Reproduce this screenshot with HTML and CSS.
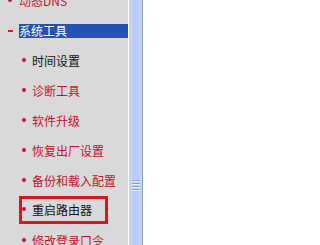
FILE: index.html
```html
<!DOCTYPE html>
<html>
<head>
<meta charset="utf-8">
<link rel="stylesheet" href="styles.css">
</head>
<body>
<div class="frame">
  <nav class="sidebar">
    <ul class="menu">
      <li class="row top"><span class="dot"></span><span class="lbl red">动态DNS</span></li>
      <li class="row top"><span class="dash"></span><span class="lbl hl">系统工具</span></li>
      <li class="row sub"><span class="dot"></span><span class="lbl dark">时间设置</span></li>
      <li class="row sub"><span class="dot"></span><span class="lbl red">诊断工具</span></li>
      <li class="row sub"><span class="dot"></span><span class="lbl red">软件升级</span></li>
      <li class="row sub"><span class="dot"></span><span class="lbl red">恢复出厂设置</span></li>
      <li class="row sub"><span class="dot"></span><span class="lbl red">备份和载入配置</span></li>
      <li class="row boxed"><span class="box"><span class="dot"></span><span class="lbl dark">重启路由器</span></span></li>
      <li class="row sub"><span class="dot"></span><span class="lbl red">修改登录口令</span></li>
    </ul>
  </nav>
  <div class="scrollbar">
    <div class="thumb">
      <div class="grip"><i></i><i></i><i></i><i></i></div>
    </div>
  </div>
  <main class="content"></main>
</div>
</body>
</html>
```
FILE: styles.css
```css
html, body {
  margin: 0;
  padding: 0;
  background: #ffffff;
  overflow: hidden;
}
.frame {
  display: flex;
  width: 315px;
  height: 245px;
  overflow: hidden;
  font-family: "Noto Sans CJK SC", "Noto Sans", sans-serif;
  font-size: 12px;
}
.sidebar {
  width: 128px;
  flex: none;
  background: #d9d9d9;
  overflow: hidden;
}
.menu {
  list-style: none;
  margin: -14px 0 0 0;
  padding: 0;
}
.row {
  height: 30px;
  display: flex;
  align-items: center;
  white-space: nowrap;
}
.row.top {
  padding-left: 8px;
}
.row.sub {
  padding-left: 22px;
}
.row.boxed {
  padding-left: 19px;
}
.dot {
  width: 4px;
  height: 4px;
  border-radius: 50%;
  background: #c8142c;
  flex: none;
  margin-right: 6px;
  margin-bottom: 3px;
}
.row.top .dot {
  margin-right: 7px;
}
.dash {
  width: 5px;
  height: 2px;
  background: #d0182c;
  flex: none;
  margin-right: 6px;
}
.lbl {
  line-height: 14px;
}
.red {
  color: #c8102a;
}
.dark {
  color: #111111;
}
.hl {
  flex: 1;
  height: 14px;
  background: #2552b4;
  color: #ffffff;
}
.box {
  display: flex;
  align-items: center;
  height: 22px;
  width: 83px;
  border: 3px solid #dc1420;
  margin-top: -2px;
}
.scrollbar {
  width: 15px;
  flex: none;
  display: flex;
  border-left: 1px solid #ffffff;
  border-right: 1px solid #93a8b4;
  box-sizing: border-box;
}
.thumb {
  flex: 1;
  background: linear-gradient(to right, #c9d6fa, #bccbf6 50%, #c4d2fa);
  padding-top: 180px;
  display: flex;
  flex-direction: column;
  align-items: center;
}
.grip {
  display: flex;
  flex-direction: column;
  gap: 1px;
  width: 8px;
}
.grip i {
  display: block;
  height: 1px;
  background: #8c9fdc;
  border-bottom: 1px solid #eef2ff;
}
.content {
  flex: 1;
  background: #ffffff;
}
```
